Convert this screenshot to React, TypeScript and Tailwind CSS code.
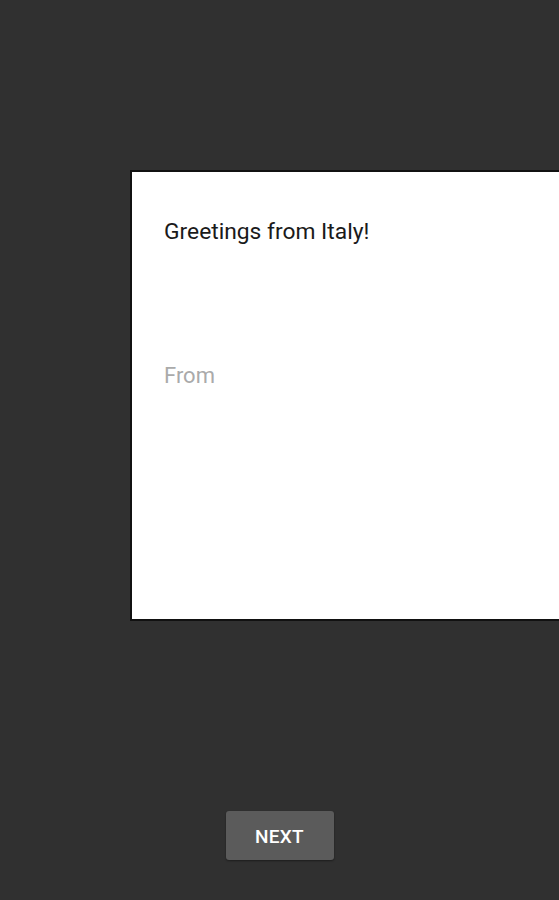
import React from "react";

export default function App() {
  return (
    <div
      className="w-[559px] h-[900px] bg-[#303030] overflow-hidden flex flex-col"
      style={{ fontFamily: "Roboto, 'Liberation Sans', sans-serif" }}
    >
      <div className="ml-[130px] mt-[170px] w-[460px] h-[451px] shrink-0 bg-white border-2 border-[#111] border-r-0 flex flex-col pl-[32px] pt-[44px]">
        <div className="text-[22.8px] leading-[31px] text-[#1a1a1a]">Greetings from Italy!</div>
        <div className="mt-[114px] text-[22px] leading-[30px] text-[#aaaaaa]">From</div>
      </div>
      <div className="flex justify-center mt-[190px]">
        <button className="w-[108px] h-[49px] pt-[3px] bg-[#5b5b5b] rounded-[3px] text-white text-[19px] font-medium tracking-[0.3px] shadow-[0_1px_2px_rgba(0,0,0,0.4)]">
          NEXT
        </button>
      </div>
    </div>
  );
}
